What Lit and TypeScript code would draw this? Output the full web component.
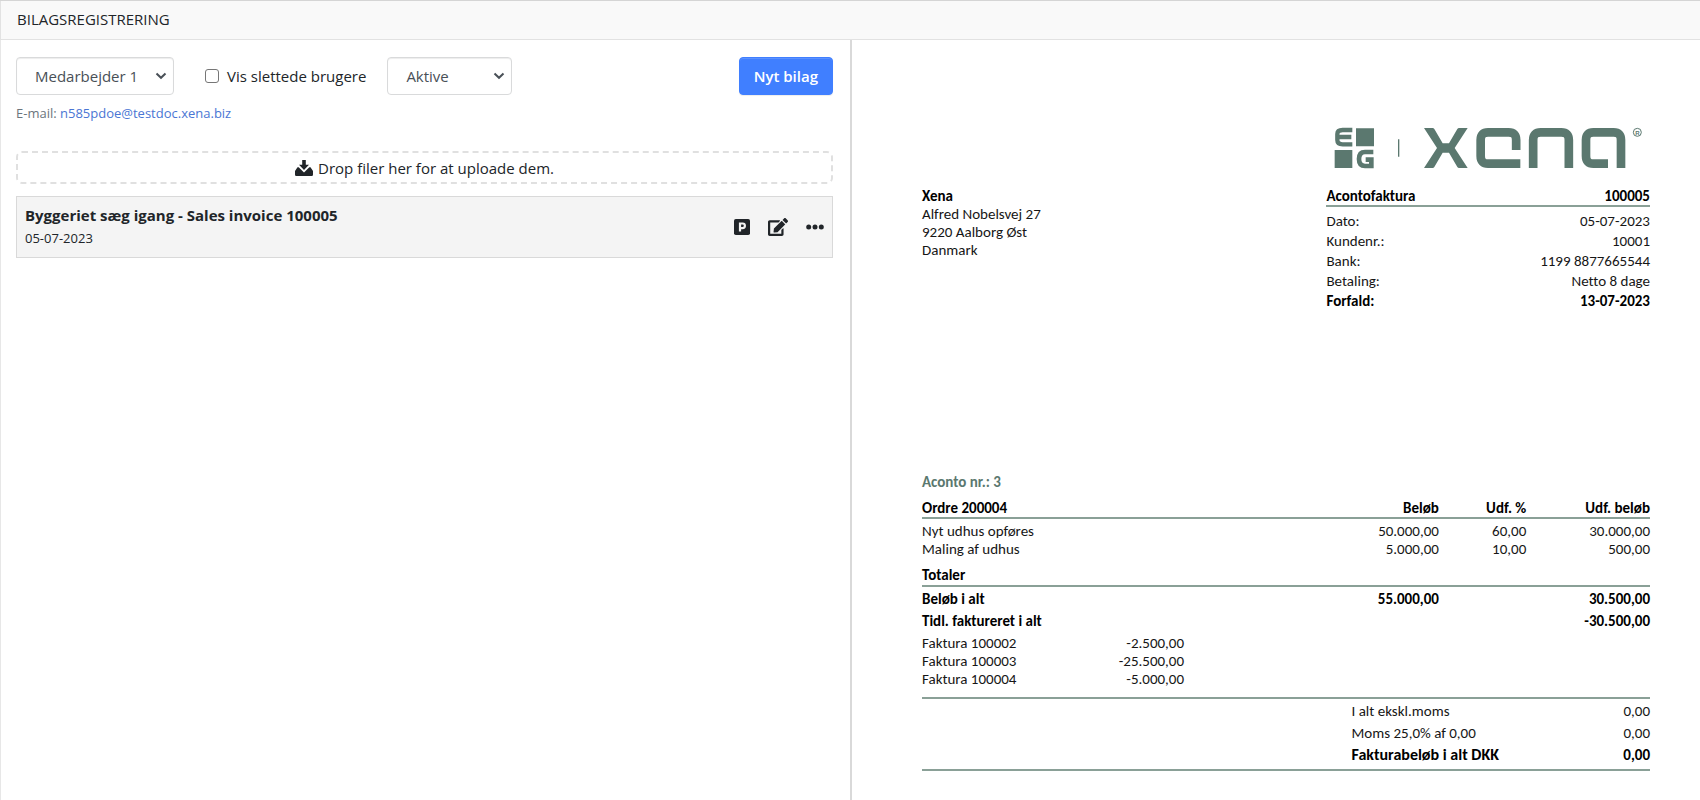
import { LitElement, html, css, svg } from "lit";
import { customElement, property } from "lit/decorators.js";

interface OrderLine {
  text: string;
  amount: string;
  percent: string;
  invoiced: string;
}

const meta: [string, string][] = [
  ["Dato:", "05-07-2023"],
  ["Kundenr.:", "10001"],
  ["Bank:", "1199 8877665544"],
  ["Betaling:", "Netto 8 dage"],
];

const lines: OrderLine[] = [
  { text: "Nyt udhus opføres", amount: "50.000,00", percent: "60,00", invoiced: "30.000,00" },
  { text: "Maling af udhus", amount: "5.000,00", percent: "10,00", invoiced: "500,00" },
];

const earlier: [string, string][] = [
  ["Faktura 100002", "-2.500,00"],
  ["Faktura 100003", "-25.500,00"],
  ["Faktura 100004", "-5.000,00"],
];

const chevron = svg`<svg class="chevron" width="12" height="8" viewBox="0 0 12 8" aria-hidden="true">
  <path d="M1.500 1.500 6 5.800l4.500-4.300" fill="none" stroke="#495057" stroke-width="2"/>
</svg>`;

@customElement("voucher-list")
export class VoucherList extends LitElement {
  static styles = css`
    :host { display: block; padding: 17px 17px 16px 15px; }
    .toolbar { display: flex; align-items: center; }
    .pick { display: grid; align-items: center; }
    .pick select, .pick .chevron { grid-area: 1 / 1; }
    .pick .chevron { justify-self: end; margin-right: 7px; pointer-events: none; }
    select {
      appearance: none; box-sizing: border-box; height: 38px; width: 100%;
      padding: 0 24px 0 18px; border: 1px solid #d9dadb; border-radius: 4px;
      background: #fff; color: #495057; font: inherit;
      box-shadow: inset 0 1px 1px rgba(0, 0, 0, 0.075);
    }
    .employee { width: 158px; }
    .status { width: 125px; margin-left: 21px; }
    .deleted { display: flex; align-items: center; gap: 8px; margin-left: 31px; }
    .deleted input {
      appearance: none; box-sizing: border-box; width: 14px; height: 14px; margin: 0;
      border: 1px solid #767676; border-radius: 3px; background: #fff;
    }
    .deleted input:checked { background: #407fff; }
    .new {
      margin-left: auto; height: 38px; padding: 0 14px; border: 1px solid #407fff;
      border-radius: 4px; background: #407fff; color: #fff; font: inherit; font-weight: 600;
      box-shadow: inset 0 1px 0 rgba(255, 255, 255, 0.15), 0 1px 1px rgba(0, 0, 0, 0.075);
    }
    .mail { margin: 8px 0 0; font-size: 13px; line-height: 20px; color: #6c757d; }
    .mail a { color: #4a76d4; text-decoration: none; }
    .drop {
      display: flex; align-items: center; justify-content: center; gap: 5px;
      margin-top: 28px; height: 29px; border: 2px dashed #e0e0e0; border-radius: 6px;
    }
    .card {
      display: flex; align-items: center; justify-content: space-between;
      margin-top: 12px; padding: 7px 8px; border: 1px solid #d9d9d9; background: #f4f4f4;
    }
    .title { margin: 0; font-size: 15px; line-height: 22px; font-weight: 700; }
    .date { display: block; font-size: 13px; line-height: 24px; }
    .actions { display: flex; align-items: center; gap: 18px; }
    .actions button { display: flex; padding: 0; border: 0; background: none; color: #212529; }
  `;

  render() {
    return html`
      <div class="toolbar">
        <div class="pick employee">
          <select aria-label="Medarbejder"><option>Medarbejder 1</option></select>${chevron}
        </div>
        <label class="deleted"><input type="checkbox" />Vis slettede brugere</label>
        <div class="pick status">
          <select aria-label="Status"><option>Aktive</option></select>${chevron}
        </div>
        <button class="new" type="button">Nyt bilag</button>
      </div>
      <p class="mail">E-mail: <a href="mailto:n585pdoe@testdoc.xena.biz">n585pdoe@testdoc.xena.biz</a></p>
      <div class="drop">
        <svg width="18" height="16" viewBox="0 0 18 16" fill="#212529" aria-hidden="true">
          <path d="M7.200 0h3.600v4.800h3.200L9 10 4 4.800h3.200z"/>
          <path d="M3.700 7.200 9 12.400l5.300-5.200h1.200L18 11v3.400c0 .9-.7 1.600-1.600 1.600H1.600C.7 16 0 15.300 0 14.400V11l2.500-3.800z"/>
        </svg>
        <span>Drop filer her for at uploade dem.</span>
      </div>
      <article class="card">
        <div>
          <h2 class="title">Byggeriet sæg igang - Sales invoice 100005</h2>
          <time class="date" datetime="2023-07-05">05-07-2023</time>
        </div>
        <div class="actions">
          <button type="button" aria-label="Parkér">
            <svg width="16" height="16" viewBox="0 0 16 16">
              <rect width="16" height="16" rx="1.8" fill="currentColor"/>
              <path d="M6 12.500V4.500h2.600a2.200 2.200 0 0 1 0 4.600H6" fill="none" stroke="#f4f4f4" stroke-width="2.200"/>
            </svg>
          </button>
          <button type="button" aria-label="Rediger">
            <svg width="20" height="18" viewBox="0 0 576 512" fill="currentColor">
              <path d="M402.600 83.200l90.200 90.200c3.800 3.800 3.800 10 0 13.800L274.400 405.600l-92.800 10.300c-12.400 1.400-22.900-9.100-21.500-21.500l10.300-92.800L388.800 83.200c3.800-3.800 10-3.800 13.800 0zm162-22.900l-48.800-48.800c-15.200-15.200-39.900-15.200-55.200 0l-35.400 35.400c-3.800 3.800-3.800 10 0 13.800l90.200 90.200c3.800 3.800 10 3.800 13.800 0l35.400-35.400c15.200-15.300 15.200-40 0-55.200zM384 346.200V448H64V128h229.800c3.200 0 6.200-1.300 8.500-3.500l40-40c7.600-7.600 2.200-20.500-8.500-20.500H48C21.500 64 0 85.500 0 112v352c0 26.500 21.500 48 48 48h352c26.500 0 48-21.500 48-48V306.200c0-10.700-12.900-16-20.500-8.500l-40 40c-2.200 2.300-3.500 5.300-3.500 8.500z"/>
            </svg>
          </button>
          <button type="button" aria-label="Mere">
            <svg width="18" height="6" viewBox="0 0 18 6" fill="currentColor">
              <circle cx="2.700" cy="3" r="2.500"/><circle cx="9" cy="3" r="2.500"/><circle cx="15.300" cy="3" r="2.500"/>
            </svg>
          </button>
        </div>
      </article>
    `;
  }
}

@customElement("invoice-preview")
export class InvoicePreview extends LitElement {
  static styles = css`
    :host {
      display: block; padding: 87px 50px 28px 70px;
      font-family: Carlito, Lato, sans-serif; font-size: 15px; line-height: 18px; color: #161616;
      font-variant-ligatures: none;
    }
    .logo { display: block; margin: 0 8px 18px auto; }
    .top { display: grid; grid-template-columns: 5fr 4fr; align-items: start; }
    address { font-style: normal; }
    table { width: 100%; border-collapse: separate; border-spacing: 0; }
    th, td { padding: 0; text-align: left; font-weight: 400; }
    .num { text-align: right; }
    .bold th, .bold td, thead th, b { font-weight: 700; color: #000; }
    .meta th, .meta td { line-height: 20px; }
    .meta thead th { line-height: 18px; border-bottom: 2px solid #8aa097; }
    .meta tbody tr:first-child > * { padding-top: 4px; }
    .part { margin: 162px 0 8px; font-size: 15px; line-height: 18px; font-weight: 700; color: #5b786f; }
    .order { table-layout: fixed; }
    .c1 { width: 36%; }
    .c2 { width: 35%; }
    .c3 { width: 12%; }
    .c4 { width: 17%; }
    .half { width: 18%; }
    .order thead th { border-bottom: 2px solid #8aa097; }
    .order .first > * { padding-top: 3px; }
    .order .totals > * { padding: 8px 0 1px; border-bottom: 2px solid #8aa097; }
    .order .next > * { padding-top: 4px; }
    .sum { margin-top: 9px; padding: 3px 0 5px 59%; border: solid #8aa097; border-width: 2px 0; }
    .sum th, .sum td { padding-bottom: 4px; }
    .sum .total > * { padding-bottom: 0; }
    .sum .total th { font-size: 16px; }
  `;

  render() {
    return html`
      <svg class="logo" width="308" height="42" viewBox="72 51 924 126" role="img" aria-label="EG Xena">
        <g fill="#5b786f">
          <path d="M138 55h54v54h-54zM74 120h53v54H74z"/>
          <path d="M342 54h26q3 0 5 3l25 43h19l25-43q2-3 5-3h26l-39 60 39 60h-26q-3 0-5-3l-25-43h-19l-25 43q-2 3-5 3h-26l39-60z"/>
        </g>
        <g fill="none" stroke="#5b786f">
          <path d="M127 60H98Q82 60 82 72V90Q82 103 98 103H127M82 81H124" stroke-width="13"/>
          <path d="M190 126H165Q147 126 147 147T165 168H184V149H167" stroke-width="14"/>
          <path d="M266 88V140" stroke-width="4"/>
          <g stroke-width="26" stroke-linejoin="round">
            <path d="M618.500 120V90Q618.500 67 596 67H534Q512 67 512 90V138Q512 161 534 161H631"/>
            <path d="M669.500 174V90Q669.500 67 692 67H754Q776.500 67 776.500 90V174"/>
            <path d="M933 174V90Q933 67 911 67H850Q828 67 828 90V138Q828 161 850 161H894"/>
          </g>
          <circle cx="982" cy="67" r="12" stroke-width="3"/>
        </g>
        <text x="982" y="73.500" font-family="Liberation Sans" font-weight="700" font-size="18" text-anchor="middle" fill="#5b786f">R</text>
      </svg>
      <div class="top">
        <address><b>Xena</b><br />Alfred Nobelsvej 27<br />9220 Aalborg Øst<br />Danmark</address>
        <table class="meta">
          <thead>
            <tr><th>Acontofaktura</th><th class="num">100005</th></tr>
          </thead>
          <tbody>
            ${meta.map(([k, v]) => html`<tr><th>${k}</th><td class="num">${v}</td></tr>`)}
            <tr class="bold"><th>Forfald:</th><td class="num">13-07-2023</td></tr>
          </tbody>
        </table>
      </div>
      <h2 class="part">Aconto nr.: 3</h2>
      <table class="order">
        <colgroup><col class="c1" /><col class="c2" /><col class="c3" /><col class="c4" /></colgroup>
        <thead>
          <tr>
            <th>Ordre 200004</th><th class="num">Beløb</th><th class="num">Udf. %</th><th class="num">Udf. beløb</th>
          </tr>
        </thead>
        <tbody>
          ${lines.map((l, i) => html`<tr class=${i === 0 ? "first" : ""}>
            <td>${l.text}</td><td class="num">${l.amount}</td><td class="num">${l.percent}</td><td class="num">${l.invoiced}</td>
          </tr>`)}
          <tr class="bold totals"><th colspan="4">Totaler</th></tr>
          <tr class="bold first">
            <th>Beløb i alt</th><td class="num">55.000,00</td><td></td><td class="num">30.500,00</td>
          </tr>
          <tr class="bold next"><th colspan="3">Tidl. faktureret i alt</th><td class="num">-30.500,00</td></tr>
        </tbody>
      </table>
      <table class="order">
        <colgroup><col class="half" /><col class="half" /><col /></colgroup>
        <tbody>
          ${earlier.map(([k, v], i) => html`<tr class=${i === 0 ? "next" : ""}>
            <td>${k}</td><td class="num">${v}</td><td></td>
          </tr>`)}
        </tbody>
      </table>
      <div class="sum">
        <table>
          <tbody>
            <tr><th>I alt ekskl.moms</th><td class="num">0,00</td></tr>
            <tr><th>Moms 25,0% af 0,00</th><td class="num">0,00</td></tr>
            <tr class="bold total"><th>Fakturabeløb i alt DKK</th><td class="num">0,00</td></tr>
          </tbody>
        </table>
      </div>
    `;
  }
}

@customElement("app-root")
export class AppRoot extends LitElement {
  @property() heading = "BILAGSREGISTRERING";

  static styles = css`
    :host {
      display: flex; flex-direction: column; box-sizing: border-box; min-height: 100vh;
      border-top: 1px solid #d5d5d5; background: #fff;
      font-family: "Segoe UI", "Open Sans", sans-serif; font-size: 15px; line-height: 24px; color: #212529;
    }
    header { padding: 6px 16px 8px; border: solid #e2e2e2; border-width: 0 0 1px 1px; background: #f9f9f9; }
    h1 { margin: 0; font-size: 15px; line-height: 24px; font-weight: 500; }
    main { flex: 1; display: grid; grid-template-columns: 1fr 1fr; }
    .left { border-left: 1px solid #e7e7e7; }
    .right { border-left: 2px solid #d9d9d9; }
  `;

  render() {
    return html`
      <header><h1>${this.heading}</h1></header>
      <main>
        <section class="left"><voucher-list></voucher-list></section>
        <section class="right"><invoice-preview></invoice-preview></section>
      </main>
    `;
  }
}
